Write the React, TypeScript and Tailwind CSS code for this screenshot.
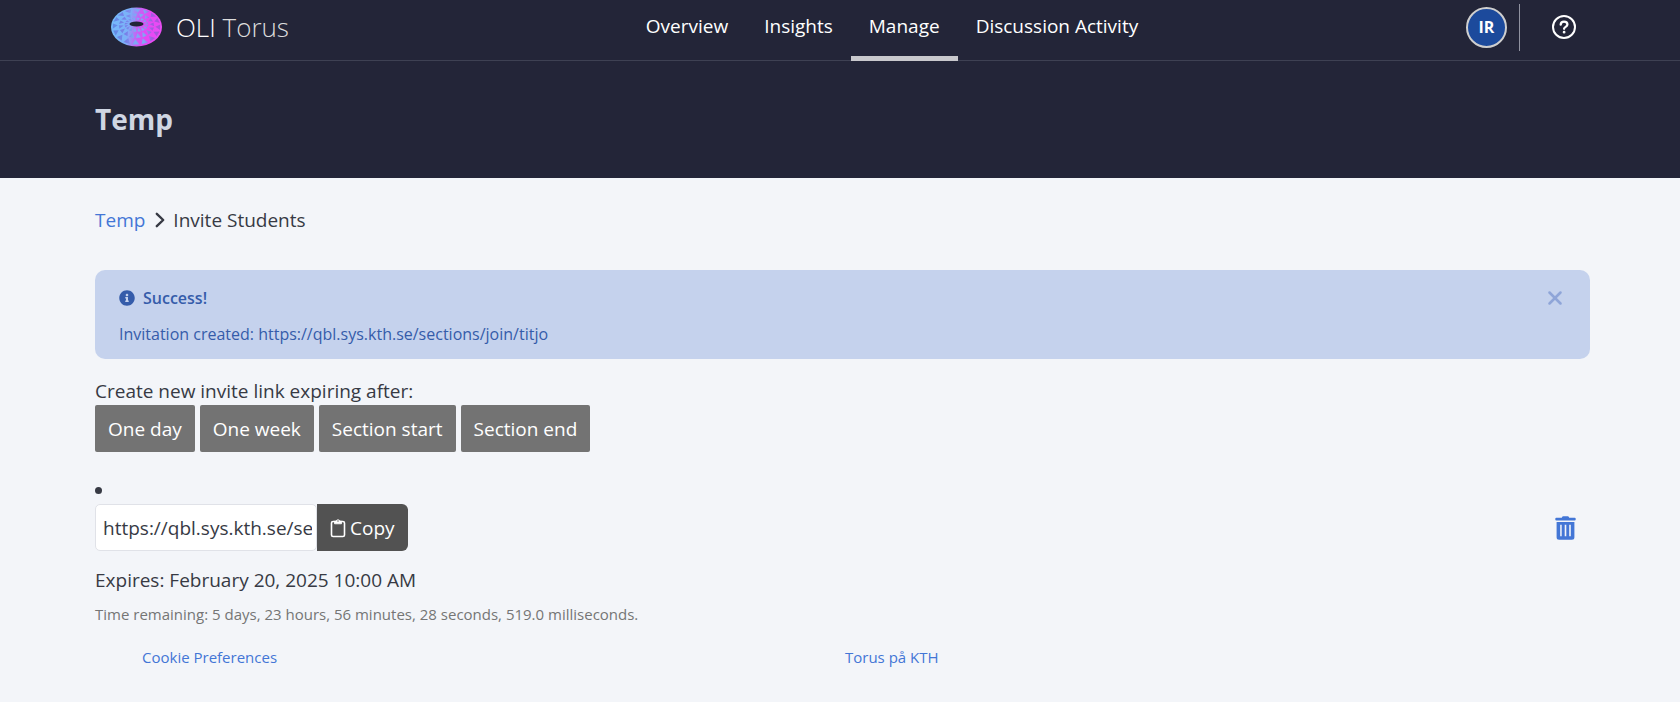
import { useState } from 'react';
import { X } from 'lucide-react';
import { FaInfoCircle } from 'react-icons/fa';

const NAV_ITEMS = ['Overview', 'Insights', 'Manage', 'Discussion Activity'];
const EXPIRY_OPTIONS = ['One day', 'One week', 'Section start', 'Section end'];

// Point on the torus surface: t runs from the hole (0) to the outer rim (1)
function torusPoint(t: number, turn: number) {
    const angle = turn * 2 * Math.PI;
    const cx = 25.5;
    const cy = 17 + (20 - 17) * t;
    const rx = 7 + (25.5 - 7) * t;
    const ry = 2.5 + (19.5 - 2.5) * t;
    return `${(cx + rx * Math.cos(angle)).toFixed(2)},${(cy + ry * Math.sin(angle)).toFixed(2)}`;
}

const RINGS = [0.05, 0.32, 0.64, 0.98];
const SEGMENTS = 16;

const TRIANGLES = RINGS.slice(0, -1).flatMap((inner, ring) =>
    Array.from({ length: SEGMENTS }, (_, i) => {
        const start = i + ring * 0.35;
        const outer = inner + (RINGS[ring + 1] - inner) * 0.8;
        return [
            torusPoint(inner, (start + 0.45) / SEGMENTS),
            torusPoint(outer, start / SEGMENTS),
            torusPoint(outer, (start + 0.75) / SEGMENTS),
        ].join(' ');
    })
);

function TorusLogo() {
    return (
        <svg className="w-[51px] h-10 flex-shrink-0" viewBox="0 0 51 40" aria-hidden="true">
            <defs>
                <linearGradient id="torus-base" x1="0" y1="4" x2="51" y2="12" gradientUnits="userSpaceOnUse">
                    <stop offset="0" stopColor="#74bcfa" />
                    <stop offset="0.38" stopColor="#7cb0f8" />
                    <stop offset="0.56" stopColor="#c860f4" />
                    <stop offset="0.75" stopColor="#e548f4" />
                    <stop offset="1" stopColor="#ea4cf4" />
                </linearGradient>
                <linearGradient id="torus-face" x1="0" y1="0" x2="51" y2="0" gradientUnits="userSpaceOnUse">
                    <stop offset="0" stopColor="#5c8fe4" />
                    <stop offset="0.3" stopColor="#7a7fe8" />
                    <stop offset="0.45" stopColor="#7fa6f6" />
                    <stop offset="0.65" stopColor="#84a4f4" />
                    <stop offset="0.8" stopColor="#a35be0" />
                    <stop offset="1" stopColor="#b04cd8" />
                </linearGradient>
            </defs>
            <ellipse cx="25.5" cy="20" rx="25.5" ry="19.5" fill="url(#torus-base)" />
            {TRIANGLES.map((points) => (
                <polygon key={points} points={points} fill="url(#torus-face)" />
            ))}
            <ellipse cx="25.5" cy="17" rx="7" ry="2.5" fill="#232538" />
        </svg>
    );
}

function HelpIcon() {
    return (
        <svg className="w-6 h-6" viewBox="0 0 24 24" fill="none" stroke="currentColor" strokeWidth="2" strokeLinecap="round">
            <circle cx="12" cy="12" r="11" />
            <path d="M8.700 9.600c.1-1.900 1.400-3 3.300-3 2 0 3.400 1.100 3.400 2.900 0 2.300-3.300 2.400-3.300 4.300" strokeWidth="2.300" />
            <circle cx="12.1" cy="17.2" r="0.6" fill="currentColor" strokeWidth="1.6" />
        </svg>
    );
}

function ClipboardIcon() {
    return (
        <svg className="w-4 h-5" viewBox="0 0 16 20" fill="none" stroke="currentColor" strokeWidth="1.6">
            <rect x="1.5" y="3.5" width="13" height="15" rx="1.6" />
            <path d="M4.5 3.2h1.6a2 2 0 0 1 3.8 0h1.6v2.6h-7z" fill="currentColor" strokeWidth="0.8" />
            <circle cx="8" cy="3" r="0.7" fill="#525252" stroke="none" />
        </svg>
    );
}

function TrashIcon() {
    return (
        <svg className="w-[21px] h-6" viewBox="0 0 21 24" fill="currentColor">
            <path d="M7 1.2Q7.300 .3 8.300 .3h4.400q1 0 1.300 .9l.2.500H19.700q1 0 1 1v.8q0 1-1 1H1.300q-1 0-1-1v-.8q0-1 1-1H6.800z" />
            <path
                fillRule="evenodd"
                d="M1.600 6h17.800v15.200q0 2.500-2.500 2.500H4.100q-2.500 0-2.500-2.500zM5.200 8.800v11.500h1.500V8.800zM9.700 8.800v11.500h1.600V8.800zM14.200 8.800v11.500h1.600V8.800z"
            />
        </svg>
    );
}

export default function App() {
    const [showAlert, setShowAlert] = useState(true);

    return (
        <div className="min-h-screen bg-[#f3f5f9] text-[#373a44] font-['Open_Sans',sans-serif] text-[19px] leading-7">
            <header className="bg-[#232538] text-white">
                <div className="flex h-[61px] border-b border-[#3e4153] pl-[95px] pr-[91px]">
                    <a href="#" className="flex items-center gap-3.5 w-[300px] pl-4 pb-1.5 text-[26px] font-light">
                        <TorusLogo />
                        <span className="text-[#dcdcdc]">
                            <span className="text-white">OLI</span> Torus
                        </span>
                    </a>

                    <nav className="flex flex-1 justify-center">
                        {NAV_ITEMS.map((item) => (
                            <a
                                key={item}
                                href="#"
                                className={`flex items-center px-[18px] pb-1 border-b-[5px] -mb-px whitespace-nowrap ${
                                    item === 'Manage' ? 'border-[#c8c8cc]' : 'border-transparent'
                                }`}
                            >
                                {item}
                            </a>
                        ))}
                    </nav>

                    <div className="flex items-center justify-end w-[200px] pr-[13px] pb-1.5">
                        <button className="w-[41px] h-[41px] rounded-full border-2 border-[#cfcfcf] bg-[#1c4a9c] text-base font-bold">
                            IR
                        </button>
                        <div className="w-px h-[47px] ml-3 mr-8 bg-[#9092a0]" />
                        <button aria-label="Help">
                            <HelpIcon />
                        </button>
                    </div>
                </div>

                <div className="flex items-center h-[117px] pl-[95px] pr-[91px] pb-0.5">
                    <h1 className="text-[28px] font-bold text-[#cfd6e3]">Temp</h1>
                </div>
            </header>

            <main className="pl-[95px] pr-[90px] pt-7">
                <nav className="flex items-center" aria-label="Breadcrumb">
                    <a href="#" className="text-[#4376d6]">Temp</a>
                    <svg className="w-2.5 h-4 ml-2.5 mr-2" viewBox="0 0 10 16" fill="none" stroke="currentColor" strokeWidth="2.4" strokeLinecap="round" strokeLinejoin="round">
                        <path d="M1.800 1.800L8.200 8l-6.400 6.200" />
                    </svg>
                    <span>Invite Students</span>
                </nav>

                {showAlert && (
                    <div role="alert" className="mt-9 px-6 pt-4 pb-[13px] rounded-[10px] bg-[#c5d2ed] text-[#355caa] text-base leading-6">
                        <div className="flex items-center">
                            <FaInfoCircle className="w-4 h-4" />
                            <strong className="ml-2 font-semibold">Success!</strong>
                            <button
                                aria-label="Close"
                                onClick={() => setShowAlert(false)}
                                className="ml-auto text-[#8fa5d8]"
                            >
                                <X className="w-[22px] h-[22px]" strokeWidth={2.8} />
                            </button>
                        </div>
                        <p className="mt-3">Invitation created: https://qbl.sys.kth.se/sections/join/titjo</p>
                    </div>
                )}

                <p className="mt-[18px]">Create new invite link expiring after:</p>
                <div className="flex gap-[5px]">
                    {EXPIRY_OPTIONS.map((option) => (
                        <button key={option} className="h-[47px] px-[13px] rounded-[2px] bg-[#737373] text-white">
                            {option}
                        </button>
                    ))}
                </div>

                <ul className="mt-6 list-disc list-inside">
                    <li>
                        <div className="flex items-center">
                            <input
                                type="text"
                                readOnly
                                aria-label="Invite link"
                                value="https://qbl.sys.kth.se/sections/join/titjo"
                                className="w-[222px] h-[47px] pl-[7px] pr-1 rounded-[5px] border border-[#e0e2e8] bg-white outline-none"
                            />
                            <button className="flex items-center gap-1 h-[47px] px-[13px] rounded-r-md bg-[#525252] text-white">
                                <ClipboardIcon />
                                Copy
                            </button>
                            <button aria-label="Delete invite" className="ml-auto mr-3.5 text-[#4376d6]">
                                <TrashIcon />
                            </button>
                        </div>
                        <p className="mt-[15px]">Expires: February 20, 2025 10:00 AM</p>
                        <p className="mt-2 text-[15px] leading-6 text-[#757575]">
                            Time remaining: 5 days, 23 hours, 56 minutes, 28 seconds, 519.0 milliseconds.
                        </p>
                    </li>
                </ul>
            </main>

            <footer className="grid grid-cols-2 pl-[142px] pr-[132px] pt-[19px] text-[15px] leading-6 text-[#4376d6]">
                <a href="#" className="justify-self-start">Cookie Preferences</a>
                <a href="#" className="justify-self-start">Torus på KTH</a>
            </footer>
        </div>
    );
}
